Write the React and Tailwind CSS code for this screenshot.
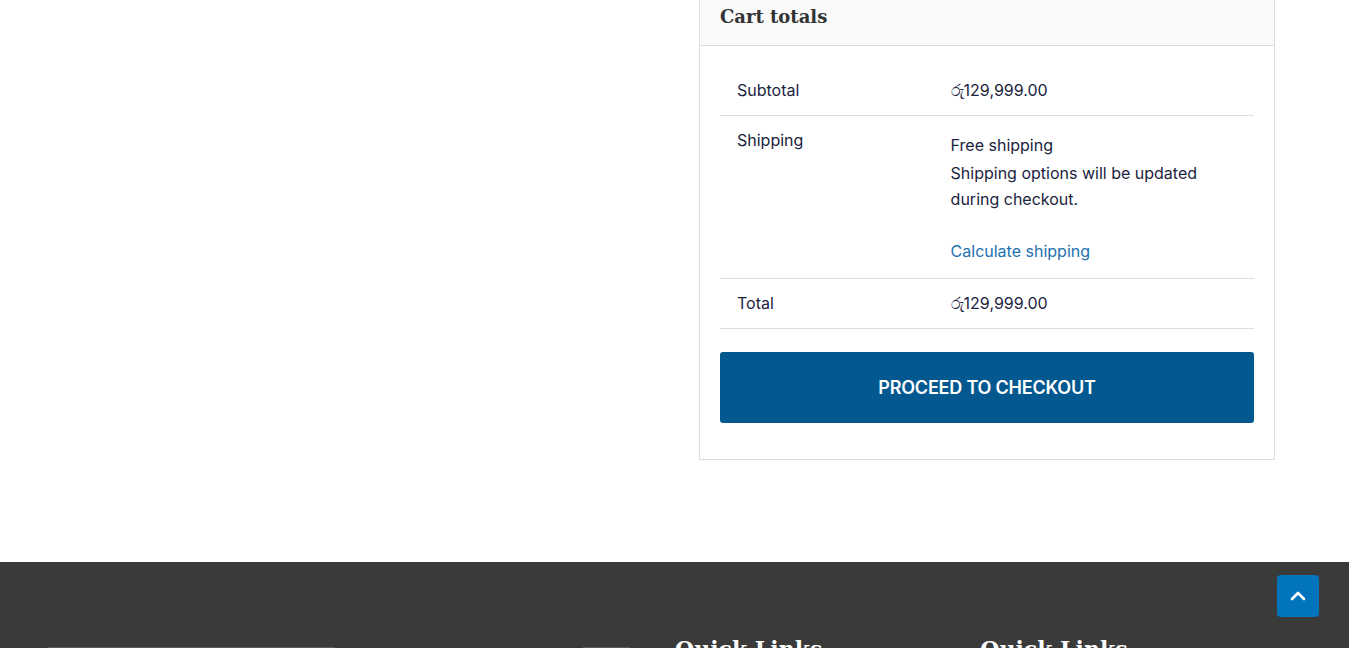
import { ChevronUp } from 'lucide-react';

const sans = { fontFamily: 'Inter, "Open Sans", sans-serif' };

export default function App() {
    return (
        <div className="min-h-screen bg-white overflow-hidden" style={sans}>
            <div className="flex justify-end pr-[74px] pb-[102px]">
                <div className="w-[576px] border border-[#dddddd] -mt-[14px]">
                    <div className="bg-[#fafafa] border-b border-[#dddddd] px-5 pt-[12px] pb-[10px]">
                        <h2 className="text-[18px] leading-[36px] font-bold text-[#333333]" style={{ fontFamily: '"DejaVu Serif", "Liberation Serif", serif' }}>
                            Cart totals
                        </h2>
                    </div>
                    <div className="px-5 pt-[19px] pb-[36px]">
                        <table className="w-full border-collapse text-[16px] text-[#1b2340]">
                            <tbody>
                                <tr className="border-b border-[#dddddd]">
                                    <th className="w-[40%] text-left font-normal px-[17px] h-[50px] align-middle">Subtotal</th>
                                    <td className="px-[17px] align-middle">රු129,999.00</td>
                                </tr>
                                <tr className="border-b border-[#dddddd]">
                                    <th className="text-left font-normal px-[17px] pt-[13px] align-top leading-[22px]">Shipping</th>
                                    <td className="px-[17px] pt-[18px] pb-[16px] align-top">
                                        <div className="leading-[22px]">Free shipping</div>
                                        <div className="mt-[4px] leading-[26px]">Shipping options will be updated during checkout.</div>
                                        <div className="mt-[28px] leading-[22px]">
                                            <a className="text-[#2271b1]" href="#">Calculate shipping</a>
                                        </div>
                                    </td>
                                </tr>
                                <tr className="border-b border-[#dddddd]">
                                    <th className="text-left font-normal px-[17px] h-[50px] align-middle">Total</th>
                                    <td className="px-[17px] align-middle">රු129,999.00</td>
                                </tr>
                            </tbody>
                        </table>
                        <button className="mt-[23px] w-full h-[71px] bg-[#03588f] rounded-[3px] text-white font-semibold text-[18px] uppercase tracking-[-0.2px]">
                            Proceed to checkout
                        </button>
                    </div>
                </div>
            </div>

            <footer className="bg-[#3a3a3a] h-[86px] relative">
                <button className="absolute right-[30px] top-[13px] w-[42px] h-[42px] rounded-[4px] bg-[#0274be] flex items-center justify-center text-white">
                    <ChevronUp size={24} strokeWidth={2.6} />
                </button>
                <div className="flex pt-[77px] pl-[48px]">
                    <div className="w-[287px] h-[10px] mt-[8px] bg-[#5a5a5a]" />
                    <div className="w-[47px] h-[10px] mt-[8px] ml-[248px] bg-[#5a5a5a]" />
                    <h3 className="ml-[45px] text-white text-[22px] font-bold leading-[20px]" style={{ fontFamily: '"DejaVu Serif", serif' }}>Quick Links</h3>
                    <h3 className="ml-[158px] text-white text-[22px] font-bold leading-[20px]" style={{ fontFamily: '"DejaVu Serif", serif' }}>Quick Links</h3>
                </div>
            </footer>
        </div>
    );
}
